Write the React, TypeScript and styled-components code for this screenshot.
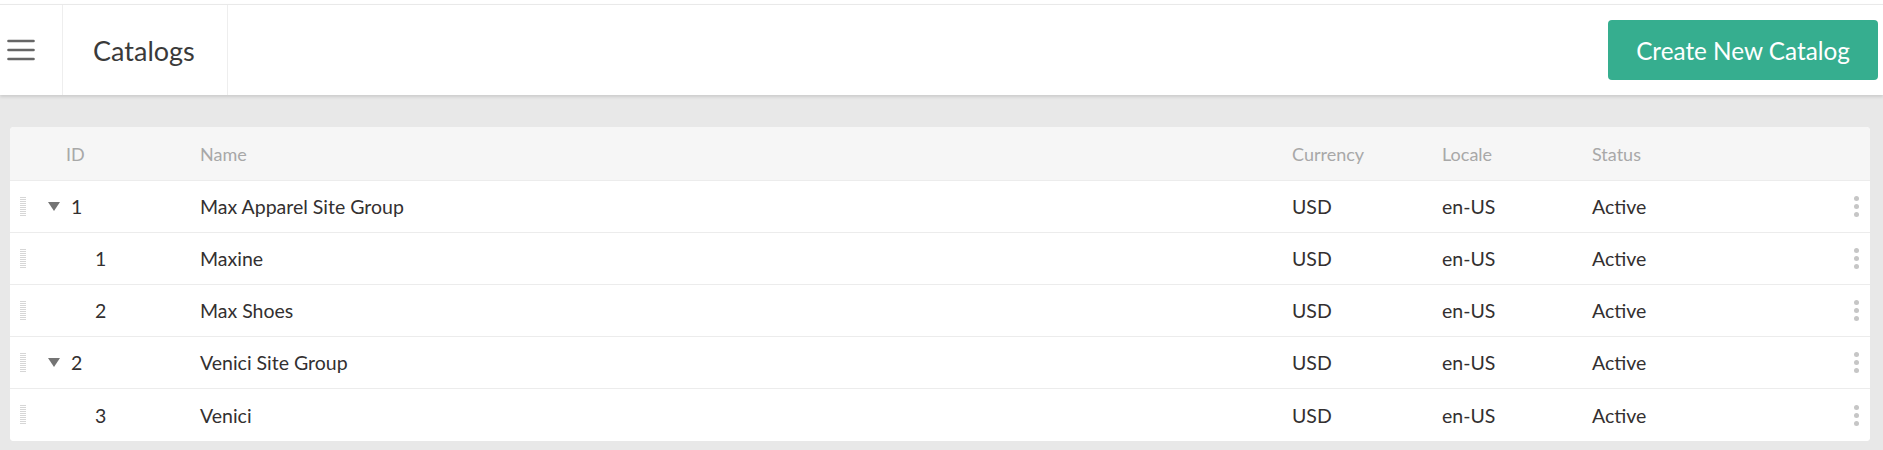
import React from "react";
import styled, { createGlobalStyle } from "styled-components";

const GlobalStyle = createGlobalStyle`
  html, body {
    margin: 0;
    padding: 0;
    background: #e8e8e8;
    font-family: Lato, "Open Sans", Arial, sans-serif;
    color: #333;
  }
  * { box-sizing: border-box; }
`;

const TopStrip = styled.div`
  background: #fff;
  padding-top: 4px;
  position: relative;
  z-index: 1;
`;

const Header = styled.header`
  display: flex;
  align-items: stretch;
  height: 91px;
  background: #fff;
  border-top: 1px solid #e9e9e9;
  box-shadow: 0 2px 3px rgba(0, 0, 0, 0.12);
`;

const MenuCell = styled.button`
  width: 63px;
  border: none;
  border-right: 1px solid #eeeeee;
  background: transparent;
  padding: 0 0 0 7px;
  display: flex;
  align-items: center;
  cursor: pointer;
`;

const TitleCell = styled.div`
  width: 165px;
  border-right: 1px solid #eeeeee;
  display: flex;
  align-items: center;
  padding-left: 30px;
  font-size: 27px;
  color: #3a3a3a;
`;

const Spacer = styled.div`
  flex: 1;
`;

const ActionCell = styled.div`
  display: flex;
  align-items: center;
  padding-right: 5px;
`;

const PrimaryButton = styled.button`
  height: 60px;
  width: 270px;
  border: none;
  border-radius: 4px;
  background: #36ae8f;
  color: #fff;
  font-family: inherit;
  font-size: 24.3px;
  cursor: pointer;
`;

const Main = styled.main`
  padding: 32px 13px 9px 10px;
`;

const Card = styled.div`
  background: #fff;
  border-radius: 4px;
  overflow: hidden;
`;

const Row = styled.div<{ $head?: boolean }>`
  display: grid;
  grid-template-columns: 30px 160px 1092px 150px 150px 1fr 28px;
  align-items: center;
  height: ${(p) => (p.$head ? "54px" : "52px")};
  background: ${(p) => (p.$head ? "#f6f6f6" : "#fff")};
  border-bottom: 1px solid #ececec;
  font-size: ${(p) => (p.$head ? "18px" : "19.5px")};
  color: ${(p) => (p.$head ? "#a8a8a8" : "#333030")};
  &:last-child { border-bottom: none; }
`;

const HandleCell = styled.div`
  padding-left: 10px;
  display: flex;
  align-items: center;
`;

const Handle = styled.span`
  display: block;
  width: 6px;
  height: 20px;
  background: repeating-linear-gradient(
    to bottom,
    #d6d6d6 0,
    #d6d6d6 1px,
    transparent 1px,
    transparent 2px
  );
`;

const IdCell = styled.div<{ $indent: number }>`
  display: flex;
  align-items: center;
  padding-left: ${(p) => p.$indent}px;
`;

const Caret = styled.span`
  width: 0;
  height: 0;
  border-left: 6.5px solid transparent;
  border-right: 6.5px solid transparent;
  border-top: 9px solid #747474;
  margin-right: 11px;
`;

const Cell = styled.div`
  white-space: nowrap;
`;

const MoreCell = styled.div`
  display: flex;
  flex-direction: column;
  align-items: center;
  gap: 3px;
`;

const Dot = styled.span`
  width: 5px;
  height: 5px;
  border-radius: 50%;
  background: #c6c6c6;
`;

const HamburgerIcon = () => (
  <svg width="28" height="22" viewBox="0 0 28 22">
    <g stroke="#666" strokeWidth="2.6" strokeLinecap="round">
      <line x1="1.5" y1="2" x2="26.5" y2="2" />
      <line x1="1.5" y1="11" x2="26.5" y2="11" />
      <line x1="1.5" y1="20" x2="26.5" y2="20" />
    </g>
  </svg>
);

type Item = { id: number; name: string; parent: boolean };

const items: Item[] = [
  { id: 1, name: "Max Apparel Site Group", parent: true },
  { id: 1, name: "Maxine", parent: false },
  { id: 2, name: "Max Shoes", parent: false },
  { id: 2, name: "Venici Site Group", parent: true },
  { id: 3, name: "Venici", parent: false },
];

export default function App() {
  return (
    <>
      <GlobalStyle />
      <TopStrip>
        <Header>
          <MenuCell aria-label="Menu">
            <HamburgerIcon />
          </MenuCell>
          <TitleCell>Catalogs</TitleCell>
          <Spacer />
          <ActionCell>
            <PrimaryButton>Create New Catalog</PrimaryButton>
          </ActionCell>
        </Header>
      </TopStrip>
      <Main>
        <Card>
          <Row $head>
            <div />
            <IdCell $indent={26}>ID</IdCell>
            <Cell>Name</Cell>
            <Cell>Currency</Cell>
            <Cell>Locale</Cell>
            <Cell>Status</Cell>
            <div />
          </Row>
          {items.map((it, i) => (
            <Row key={i}>
              <HandleCell>
                <Handle />
              </HandleCell>
              <IdCell $indent={it.parent ? 8 : 55}>
                {it.parent && <Caret />}
                {it.id}
              </IdCell>
              <Cell>{it.name}</Cell>
              <Cell>USD</Cell>
              <Cell>en-US</Cell>
              <Cell>Active</Cell>
              <MoreCell>
                <Dot />
                <Dot />
                <Dot />
              </MoreCell>
            </Row>
          ))}
        </Card>
      </Main>
    </>
  );
}
